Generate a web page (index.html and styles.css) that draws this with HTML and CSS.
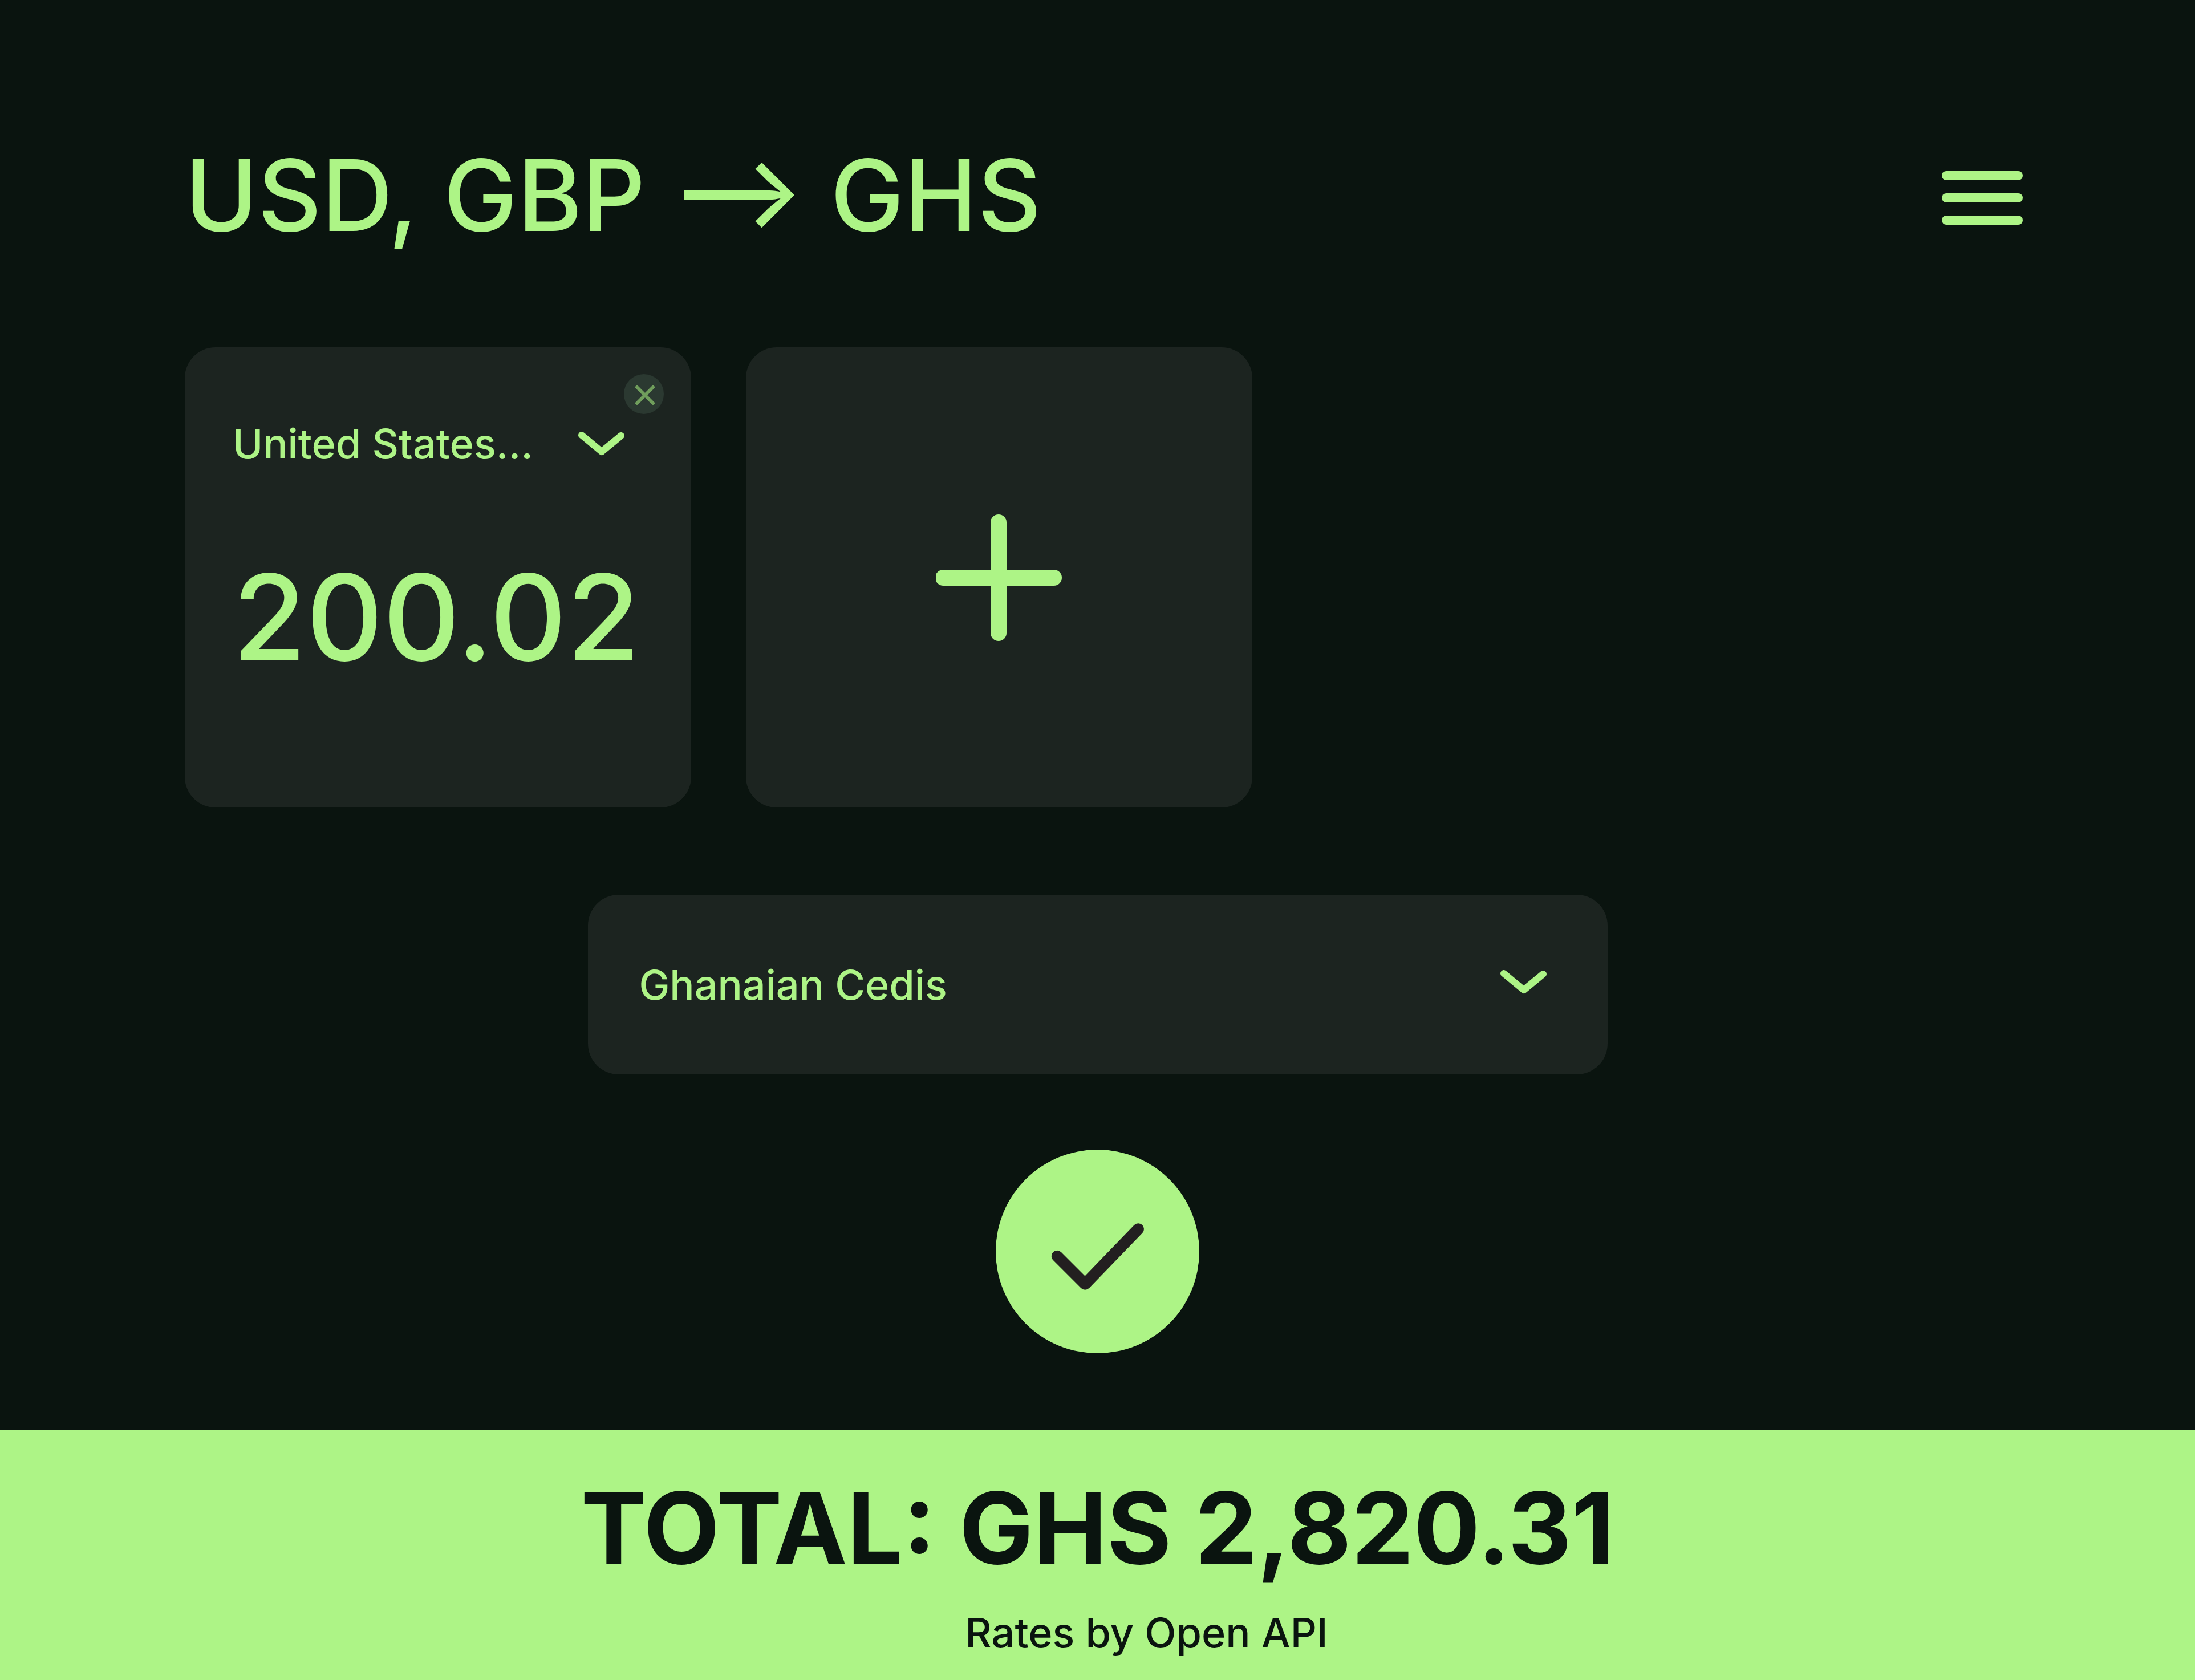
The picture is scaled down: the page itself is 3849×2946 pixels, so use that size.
FILE: index.html
```html
<!DOCTYPE html>
<html lang="en">
<head>
  <meta charset="utf-8">
  <meta name="viewport" content="width=device-width, initial-scale=1">
  <title>Currency converter</title>
  <link rel="stylesheet" href="styles.css">
</head>
<body>
  <header class="header">
    <h1 class="title">USD, GBP ⟶ GHS</h1>
    <button class="menu" type="button" aria-label="Open menu">
      <span class="menu-bar"></span>
      <span class="menu-bar"></span>
      <span class="menu-bar"></span>
    </button>
  </header>

  <main class="main">
    <section class="cards" aria-label="Amounts to convert">
      <div class="card card-amount">
        <button class="remove" type="button" aria-label="Remove currency">
          <svg class="remove-icon" viewBox="0 0 70 70" aria-hidden="true"><path d="M23 23 51 51M51 23 23 51"/></svg>
        </button>
        <div class="picker">
          <select class="picker-select" aria-label="Source currency">
            <option>United States...</option>
          </select>
          <svg class="chevron" viewBox="0 0 82 42" aria-hidden="true"><path d="M6 6 41 35 75 7"/></svg>
        </div>
        <input class="amount" type="text" inputmode="decimal" aria-label="Amount" value="200.02">
      </div>
      <button class="card card-add" type="button" aria-label="Add currency">
        <svg class="plus" viewBox="0 0 222 222" aria-hidden="true"><path d="M110 14V208M13 111H207"/></svg>
      </button>
    </section>

    <div class="picker picker-target">
      <select class="picker-select" aria-label="Target currency">
        <option>Ghanaian Cedis</option>
      </select>
      <svg class="chevron" viewBox="0 0 82 42" aria-hidden="true"><path d="M6 6 41 35 75 7"/></svg>
    </div>

    <button class="convert" type="button" aria-label="Convert">
      <svg class="check" viewBox="0 0 357 357" aria-hidden="true"><path d="M107.700 186.700 156.700 235.700 250 139.300"/></svg>
    </button>
  </main>

  <footer class="footer">
    <p class="total">TOTAL: GHS 2,820.31</p>
    <p class="source">Rates by Open API</p>
  </footer>
</body>
</html>
```

FILE: styles.css
```css
:root {
  --bg: #0a140f;
  --surface: #1c2420;
  --accent: #adf486;
}

* {
  box-sizing: border-box;
}

body {
  display: flex;
  flex-direction: column;
  min-height: 100vh;
  margin: 0;
  background: var(--bg);
  color: var(--accent);
  font-family: Inter, "Liberation Sans", sans-serif;
  font-size: 72px;
  font-weight: 500;
  line-height: 88px;
}

h1,
p {
  margin: 0;
}

button,
select,
input {
  margin: 0;
  padding: 0;
  border: 0;
  background: none;
  color: inherit;
  font: inherit;
}

button {
  cursor: pointer;
}

svg {
  display: block;
  fill: none;
  stroke: currentColor;
  stroke-linecap: round;
  stroke-linejoin: round;
}

.header {
  display: flex;
  justify-content: space-between;
  align-items: flex-end;
  padding: 238px 302px 0 324px;
}

.title {
  font-size: 173px;
  font-weight: 500;
  line-height: 208px;
}

.menu {
  display: flex;
  flex-direction: column;
  gap: 23px;
  width: 142px;
  padding-bottom: 52px;
}

.menu-bar {
  height: 16px;
  border-radius: 8px;
  background: var(--accent);
}

.main {
  flex: 1;
  display: flex;
  flex-direction: column;
  align-items: center;
  padding: 163px 324px 120px;
}

.cards {
  display: flex;
  flex-wrap: wrap;
  align-self: stretch;
  gap: 96px;
}

.card {
  flex: 0 1 888px;
  min-height: 807px;
  border-radius: 54px;
  background: var(--surface);
}

.card-amount {
  position: relative;
  display: flex;
  flex-direction: column;
  gap: 132px;
  padding: 125px 84px;
}

.card-add {
  display: grid;
  place-items: center;
}

.plus {
  width: 222px;
  stroke-width: 28px;
}

.remove {
  position: absolute;
  top: 47px;
  right: 48px;
  width: 70px;
  height: 70px;
  border-radius: 50%;
  background: #2b3931;
  color: #709e5c;
}

.remove-icon {
  stroke-width: 6px;
}

.picker {
  display: grid;
  align-items: center;
}

.picker-select {
  grid-area: 1 / 1;
  appearance: none;
  width: 100%;
}

.chevron {
  grid-area: 1 / 1;
  justify-self: end;
  width: 82px;
  margin-right: 32px;
  stroke-width: 12px;
  pointer-events: none;
}

.amount {
  width: 100%;
  height: 256px;
  font-size: 209px;
  line-height: 256px;
}

.picker-target {
  width: min(100%, 1788px);
  margin-top: 153px;
  border-radius: 54px;
  background: var(--surface);
}

.picker-target .picker-select {
  height: 315px;
  padding: 0 90px;
}

.picker-target .chevron {
  margin: 0 106px 10px 0;
}

.convert {
  width: 357px;
  height: 357px;
  margin-top: 132px;
  border-radius: 50%;
  background: var(--accent);
  color: #231f20;
}

.check {
  stroke-width: 20px;
}

.footer {
  display: flex;
  flex-direction: column;
  align-items: center;
  gap: 36px;
  padding: 67px 48px 39px;
  background: var(--accent);
  color: var(--bg);
}

.total {
  font-size: 173px;
  font-weight: 700;
  line-height: 208px;
}

.source {
  padding-left: 172px;
}
```
